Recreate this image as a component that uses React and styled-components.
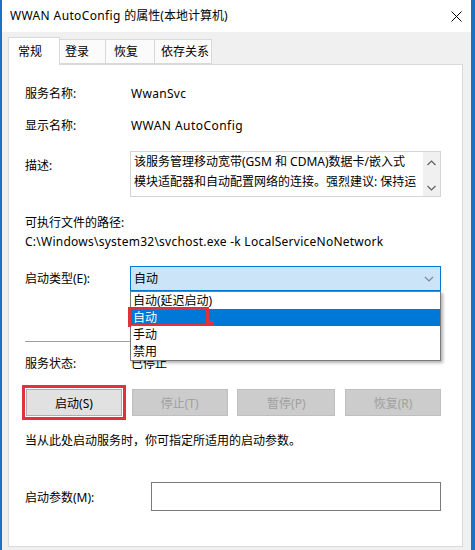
import React from 'react';
import styled, { createGlobalStyle } from 'styled-components';

const Global = createGlobalStyle`
  html, body { margin: 0; padding: 0; background: #fff; }
  body {
    font-family: "Noto Sans", "Noto Sans CJK SC", sans-serif;
    font-size: 12px;
    color: #000;
  }
  * { box-sizing: border-box; }
`;

const Window = styled.div`
  width: 475px;
  height: 550px;
  border-left: 2px solid #1b72c4;
  border-right: 4px solid #1b72c4;
  display: flex;
  flex-direction: column;
  background: #f0f0f0;
  overflow: hidden;
`;

const TitleBar = styled.div`
  height: 32px;
  flex: none;
  background: #fff;
  display: flex;
  align-items: center;
  justify-content: space-between;
  padding: 0 9px 0 8px;
`;

const Title = styled.div`
  font-size: 12px;
  line-height: 16px;
  color: #000;
`;

const Latin = styled.span`
  letter-spacing: ${p => p.ls || 0.35}px;
`;

const Body = styled.div`
  flex: 1;
  display: flex;
  flex-direction: column;
  padding: 6px 8px 3px 6px;
`;

const TabStrip = styled.div`
  display: flex;
  align-items: flex-end;
  height: 27px;
  flex: none;
  position: relative;
  z-index: 2;
  margin-bottom: -1px;
`;

const Tab = styled.div`
  width: ${p => p.w}px;
  height: ${p => (p.active ? 28 : 25)}px;
  border: 1px solid #d9d9d9;
  border-left-width: ${p => (p.first || p.active ? 1 : 0)}px;
  border-bottom: ${p => (p.active ? 'none' : '1px solid #d9d9d9')};
  background: ${p => (p.active ? '#fff' : '#fbfbfb')};
  display: flex;
  align-items: center;
  padding-left: ${p => p.pl}px;
  line-height: 16px;
  ${p => (p.active ? '' : 'margin-bottom: 1px;')}
`;

const Panel = styled.div`
  flex: 1;
  background: #fff;
  border: 1px solid #d9d9d9;
  padding: 21px 21px 0 16px;
  display: flex;
  flex-direction: column;
  position: relative;
`;

const InfoRow = styled.div`
  display: flex;
  align-items: flex-start;
  line-height: 16px;
  margin-top: ${p => p.mt || 0}px;
`;

const Label = styled.div`
  width: ${p => p.w || 105}px;
  flex: none;
  padding-top: ${p => p.pt || 0}px;
`;

const Value = styled.div`
  padding-left: 1px;
`;

const DescBox = styled.div`
  width: 311px;
  height: 46px;
  border: 1px solid #d4d4d4;
  display: flex;
`;

const DescText = styled.div`
  flex: 1;
  padding: 0 0 0 3px;
  line-height: 20px;
  color: #000;
  overflow: hidden;
  white-space: nowrap;
`;

const ScrollCol = styled.div`
  width: 17px;
  background: #f0f0f0;
  display: flex;
  flex-direction: column;
  justify-content: space-between;
  align-items: center;
  padding: 8px 0 5px;
`;

const PlainLine = styled.div`
  line-height: 16px;
  margin-top: ${p => p.mt || 0}px;
`;

const SelectWrap = styled.div`
  position: relative;
  width: 311px;
`;

const SelectBox = styled.div`
  height: 25px;
  background: #cce4f7;
  border: 1px solid #0078d7;
  display: flex;
  align-items: center;
  justify-content: space-between;
  padding: 0 6px 0 3px;
`;

const DropList = styled.div`
  position: absolute;
  left: 0;
  top: 25px;
  width: 311px;
  background: #fff;
  border: 1px solid #7a7a7a;
  box-shadow: 2px 2px 3px rgba(0, 0, 0, 0.3);
  z-index: 5;
`;

const DropItem = styled.div`
  height: 17px;
  line-height: 17px;
  padding-left: 2px;
  background: ${p => (p.selected ? '#0078d7' : '#fff')};
  color: ${p => (p.selected ? '#fff' : '#000')};
  position: relative;
`;

const RedMark = styled.div`
  position: absolute;
  left: -3px;
  top: -2px;
  width: 81px;
  height: 20px;
  border: 3px solid #e0323b;
  &::after {
    content: '';
    position: absolute;
    right: -8px;
    bottom: -5px;
    width: 6px;
    height: 8px;
    background: #e0323b;
  }
`;

const Separator = styled.div`
  height: 1px;
  background: #a0a0a0;
  margin-top: 50px;
`;

const ButtonRow = styled.div`
  display: flex;
  justify-content: space-between;
  margin-top: 17px;
  padding-left: 1px;
`;

const Btn = styled.div`
  width: ${p => p.w}px;
  height: 27px;
  display: flex;
  align-items: center;
  justify-content: center;
  background: ${p => (p.disabled ? '#cccccc' : '#e1e1e1')};
  border: 1px solid ${p => (p.disabled ? '#bfbfbf' : '#adadad')};
  color: ${p => (p.disabled ? '#a0a0a0' : '#000')};
  ${p => (p.highlight ? 'outline: 3px solid #e0323b; outline-offset: 1px;' : '')}
`;

const ParamRow = styled.div`
  display: flex;
  align-items: center;
  margin-top: 33px;
`;

const ParamInput = styled.div`
  width: 290px;
  height: 29px;
  border: 1px solid #7a7a7a;
  background: #fff;
`;

const CloseIcon = () => (
  <svg width="11" height="11" viewBox="0 0 11 11">
    <path d="M0.5 0.5 L10.5 10.5 M10.5 0.5 L0.5 10.5" stroke="#000" strokeWidth="1" fill="none" />
  </svg>
);

const Chevron = ({ up, color = '#606060', w = 9 }) => (
  <svg width={w} height="6" viewBox="0 0 9 6">
    <path
      d={up ? 'M0.5 5 L4.5 1 L8.5 5' : 'M0.5 1 L4.5 5 L8.5 1'}
      stroke={color}
      strokeWidth="1.2"
      fill="none"
    />
  </svg>
);

export default function App() {
  return (
    <>
      <Global />
      <Window>
        <TitleBar>
          <Title>
            <Latin ls={0.37}>WWAN AutoConfig </Latin>的属性(本地计算机)
          </Title>
          <CloseIcon />
        </TitleBar>
        <Body>
          <TabStrip>
            <Tab active first w={52} pl={9}>常规</Tab>
            <Tab w={46} pl={5}>登录</Tab>
            <Tab w={49} pl={8}>恢复</Tab>
            <Tab w={57} pl={6}>依存关系</Tab>
          </TabStrip>
          <Panel>
            <InfoRow>
              <Label>服务名称:</Label>
              <Value><Latin ls={0.3}>WwanSvc</Latin></Value>
            </InfoRow>
            <InfoRow mt={16}>
              <Label>显示名称:</Label>
              <Value><Latin ls={0.45}>WWAN AutoConfig</Latin></Value>
            </InfoRow>
            <InfoRow mt={17}>
              <Label pt={7}>描述:</Label>
              <DescBox>
                <DescText>
                  该服务管理移动宽带(GSM 和 CDMA)数据卡/嵌入式
                  <br />
                  模块适配器和自动配置网络的连接。强烈建议: 保持运
                </DescText>
                <ScrollCol>
                  <Chevron up />
                  <Chevron />
                </ScrollCol>
              </DescBox>
            </InfoRow>
            <PlainLine mt={18}>可执行文件的路径:</PlainLine>
            <PlainLine mt={3}>
              <Latin ls={0.25}>C:\Windows\system32\svchost.exe -k LocalServiceNoNetwork</Latin>
            </PlainLine>
            <InfoRow mt={16}>
              <Label pt={5}>启动类型(E):</Label>
              <SelectWrap>
                <SelectBox>
                  <span>自动</span>
                  <Chevron color="#7a8a99" w={10} />
                </SelectBox>
                <DropList>
                  <DropItem>自动(延迟启动)</DropItem>
                  <DropItem selected>
                    自动
                    <RedMark />
                  </DropItem>
                  <DropItem>手动</DropItem>
                  <DropItem>禁用</DropItem>
                </DropList>
              </SelectWrap>
            </InfoRow>
            <Separator />
            <InfoRow mt={14}>
              <Label>服务状态:</Label>
              <Value>已停止</Value>
            </InfoRow>
            <ButtonRow>
              <Btn w={96} highlight>启动(S)</Btn>
              <Btn w={96} disabled>停止(T)</Btn>
              <Btn w={98} disabled>暂停(P)</Btn>
              <Btn w={96} disabled>恢复(R)</Btn>
            </ButtonRow>
            <PlainLine mt={17}>当从此处启动服务时，你可指定所适用的启动参数。</PlainLine>
            <ParamRow>
              <Label w={126}>启动参数(M):</Label>
              <ParamInput />
            </ParamRow>
          </Panel>
        </Body>
      </Window>
    </>
  );
}
